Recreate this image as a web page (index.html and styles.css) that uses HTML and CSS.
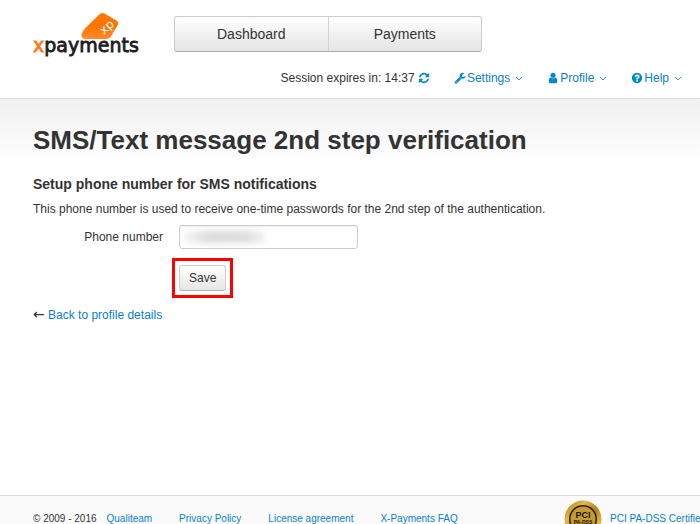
FILE: index.html
```html
<!DOCTYPE html>
<html lang="en">
<head>
<meta charset="utf-8">
<title>SMS/Text message 2nd step verification</title>
<link rel="stylesheet" href="styles.css">
</head>
<body>
<header class="header">
  <div class="header-top">
    <a class="logo" href="#" aria-label="xpayments">
      <svg width="108" height="46" viewBox="0 0 108 46">
        <defs><linearGradient id="card" x1="0" y1="0" x2="0" y2="1"><stop offset="0" stop-color="#ff7a05"/><stop offset="0.5" stop-color="#ff7300"/><stop offset="1" stop-color="#ff8c2a"/></linearGradient></defs>
        <path d="M66.500 2.200Q69 0 71.500 1.500L83.500 8.500Q86 10.500 84.800 13L77.500 25Q76 27 73 27H52Q47.500 26 48.500 22L49.500 20Q50 18.500 52 16.500Z" fill="url(#card)"/>
        <g transform="translate(71 23) rotate(-43)"><text class="card-mark" x="0" y="0">xp</text></g>
        <text class="wordmark" x="0" y="40"><tspan class="wordmark-x">x</tspan>payments</text>
      </svg>
    </a>
    <nav class="tabs">
      <a class="tab" href="#">Dashboard</a>
      <a class="tab" href="#">Payments</a>
    </nav>
  </div>
  <div class="tools">
    <span class="session">Session expires in: 14:37
      <a href="#" aria-label="Refresh session"><svg class="icon" viewBox="0 0 1792 1792"><path d="M1639 1056q0 5-1 7-64 268-268 434.500T892 1664q-146 0-282.500-55T366 1452l-129 129q-19 19-45 19t-45-19-19-45v-448q0-26 19-45t45-19h448q26 0 45 19t19 45-19 45l-137 137q71 66 161 102t187 36q134 0 250-65t186-179q11-17 53-117 8-23 30-23h192q13 0 22.500 9.500t9.500 22.500zm25-800v448q0 26-19 45t-45 19h-448q-26 0-45-19t-19-45 19-45l138-138q-148-137-349-137-134 0-250 65t-186 179q-11 17-53 117-8 23-30 23h-199q-13 0-22.500-9.500t-9.500-22.500v-7q65-268 270-434.500t480-166.500q146 0 284 55.500t245 156.500l130-129q19-19 45-19t45 19 19 45z"/></svg></a></span>
    <a class="tool" href="#"><svg class="icon" viewBox="0 0 1792 1792"><path d="M448 1472q0-26-19-45t-45-19-45 19-19 45 19 45 45 19 45-19 19-45zm644-420l-682 682q-37 37-90 37-52 0-91-37l-106-108q-38-36-38-90 0-53 38-91l681-681q39 98 114.500 173.500t173.500 114.500zm634-435q0 39-23 106-47 134-164.500 217.500t-258.500 83.500q-185 0-316.500-131.500t-131.500-316.500 131.500-316.500 316.500-131.500q58 0 121.500 16.500t107.500 46.500q16 11 16 28t-16 28l-293 169v224l193 107q5-3 79-48.500t135.500-81 70.500-35.500q15 0 23.500 10t8.500 25z"/></svg>Settings<svg class="chevron" viewBox="0 0 8 6"><path d="M1 1l3 3 3-3"/></svg></a>
    <a class="tool" href="#"><svg class="icon" viewBox="0 0 1792 1792"><path d="M1536 1399q0 109-62.500 187t-150.500 78h-854q-88 0-150.500-78t-62.500-187q0-85 8.500-160.500t31.500-152 58.500-131 94-89 134.500-34.500q131 128 313 128t313-128q76 0 134.500 34.500t94 89 58.500 131 31.500 152 8.500 160.500zm-256-887q0 159-112.500 271.500t-271.500 112.500-271.500-112.500-112.500-271.500 112.500-271.500 271.500-112.500 271.500 112.500 112.500 271.500z"/></svg>Profile<svg class="chevron" viewBox="0 0 8 6"><path d="M1 1l3 3 3-3"/></svg></a>
    <a class="tool" href="#"><svg class="icon" viewBox="0 0 1792 1792"><path d="M1024 1376v-192q0-14-9-23t-23-9h-192q-14 0-23 9t-9 23v192q0 14 9 23t23 9h192q14 0 23-9t9-23zm256-672q0-88-55.500-163t-138.500-116-170-41q-243 0-371 213-15 24 8 42l132 100q7 6 19 6 16 0 25-12 53-68 86-92 34-24 86-24 48 0 85.500 26t37.500 59q0 38-20 61t-68 45q-63 28-115.500 86.500t-52.500 125.500v36q0 14 9 23t23 9h192q14 0 23-9t9-23q0-19 21.500-49.500t54.500-49.500q32-18 49-28.500t46-35 44.500-48 28-60.500 12.500-81zm384 192q0 209-103 385.500t-279.500 279.500-385.500 103-385.500-103-279.500-279.500-103-385.500 103-385.500 279.500-279.500 385.500-103 385.500 103 279.500 279.500 103 385.500z"/></svg>Help<svg class="chevron" viewBox="0 0 8 6"><path d="M1 1l3 3 3-3"/></svg></a>
  </div>
</header>
<main class="main">
  <h1>SMS/Text message 2nd step verification</h1>
  <h2>Setup phone number for SMS notifications</h2>
  <p class="intro">This phone number is used to receive one-time passwords for the 2nd step of the authentication.</p>
  <form class="form">
    <label for="phone">Phone number</label>
    <div class="field"><input id="phone" type="tel"><span class="redaction"></span></div>
    <div class="highlight"><button type="button">Save</button></div>
  </form>
  <p class="back"><span class="arrow">←</span> <a href="#">Back to profile details</a></p>
</main>
<footer class="footer">
  <span class="copyright">© 2009 - 2016</span>
  <a class="company" href="#">Qualiteam</a>
  <a class="footer-link" href="#">Privacy Policy</a>
  <a class="footer-link" href="#">License agreement</a>
  <a class="footer-link" href="#">X-Payments FAQ</a>
  <a class="certified" href="#"><svg width="38" height="38" viewBox="0 0 38 38">
    <defs><linearGradient id="gold" x1="0" y1="0" x2="1" y2="1"><stop offset="0" stop-color="#a97913"/><stop offset="0.3" stop-color="#e2b94b"/><stop offset="0.55" stop-color="#b48219"/><stop offset="0.8" stop-color="#e5be55"/><stop offset="1" stop-color="#9a6a0c"/></linearGradient></defs>
    <circle cx="19" cy="19" r="18.500" fill="url(#gold)"/>
    <circle cx="19" cy="19" r="14" fill="#2c2208"/>
    <circle cx="19" cy="19" r="12.500" fill="#c79a35"/>
    <text class="seal-title" x="19" y="18">PCI</text>
    <text class="seal-sub" x="19" y="24">PA-DSS</text>
  </svg>PCI PA-DSS Certified</a>
</footer>
</body>
</html>
```
FILE: styles.css
```css
* { box-sizing: border-box; }

body {
  display: flex;
  flex-direction: column;
  height: 100vh;
  margin: 0;
  overflow: hidden;
  background: #fff;
  color: #333;
  font: 12px/18px "Liberation Sans", Arial, sans-serif;
}

a { color: #0a80cc; text-decoration: none; }
h1, h2, p { margin: 0; }

.header {
  flex: none;
  padding: 12px 18px 11px 33px;
  border-bottom: 1px solid #ddd;
}

.header-top { display: flex; align-items: flex-start; gap: 33px; }
.logo, .logo svg { display: block; flex: none; }

.wordmark {
  font: 19px "DejaVu Sans", sans-serif;
  fill: #1c1c22;
  stroke: #1c1c22;
  stroke-width: 0.8px;
}
.wordmark-x { fill: #f47b20; stroke: #f47b20; }
.card-mark { font: 12px "DejaVu Sans", sans-serif; fill: #fff; }

.tabs {
  display: flex;
  flex: 0 1 308px;
  margin-top: 4px;
  border: 1px solid #ccc;
  border-bottom-color: #aaa;
  border-radius: 3px;
  background: linear-gradient(#fff, #e4e4e4);
}
.tab {
  flex: 1;
  padding: 8px 0;
  color: #333;
  font-size: 14px;
  text-align: center;
}
.tab + .tab { border-left: 1px solid #d2d2d2; }

.tools {
  display: flex;
  justify-content: flex-end;
  gap: 24px;
  margin-top: 11px;
  white-space: nowrap;
}
.icon { width: 12px; height: 12px; fill: #08c; vertical-align: -2px; }
.tool { display: flex; align-items: center; gap: 1px; }
.chevron {
  width: 8px;
  height: 6px;
  margin: 2px 0 0 4px;
  fill: none;
  stroke: #3d96d2;
}

.main {
  flex: none;
  padding: 24px 33px 171px;
  background: linear-gradient(#f0f0f0, #fff 64px);
}

h1 { font-size: 26px; line-height: 34px; }
h2 { margin-top: 17px; font-size: 14px; line-height: 20px; }
.intro { margin-top: 6px; }

.form {
  display: grid;
  grid-template-columns: 130px 179px;
  column-gap: 16px;
  row-gap: 9px;
  align-items: center;
  margin-top: 7px;
}
.form label { text-align: right; }
.field { position: relative; display: flex; }
.field input {
  width: 100%;
  height: 24px;
  padding: 3px 6px;
  border: 1px solid #ccc;
  border-radius: 3px;
  box-shadow: inset 0 1px 1px #eee;
  font: inherit;
}
.redaction {
  position: absolute;
  top: 6px;
  left: 6px;
  width: 80px;
  height: 12px;
  background: linear-gradient(90deg, #f4f4f4, #dadada 30%, #dcdcdc 75%, #f0f0f0);
  filter: blur(3px);
}

.highlight {
  grid-column: 2;
  justify-self: start;
  margin-left: -7px;
  padding: 4px;
  border: 3px solid #fe0000;
}
.highlight button {
  display: block;
  padding: 3px 9px;
  border: 1px solid #ccc;
  border-bottom-color: #b3b3b3;
  border-radius: 3px;
  background: linear-gradient(#fff, #e6e6e6);
  color: #333;
  font: inherit;
}
.back { margin-top: 7px; }
.arrow { font-family: "DejaVu Sans", sans-serif; font-size: 14px; }

.footer {
  display: flex;
  flex: none;
  align-items: center;
  padding: 4px 0 4px 33px;
  border-top: 1px solid #ddd;
  background: #fafafa;
  font-size: 10px;
  white-space: nowrap;
}
.company { margin-left: 10px; }
.footer-link { margin-left: 27px; }
.certified {
  display: flex;
  align-items: center;
  gap: 8px;
  margin-left: auto;
  margin-right: -6px;
}
.seal-title, .seal-sub {
  font: bold 9px "Liberation Sans", sans-serif;
  text-anchor: middle;
  fill: #1d1605;
}
.seal-sub { font-size: 5px; }
```
